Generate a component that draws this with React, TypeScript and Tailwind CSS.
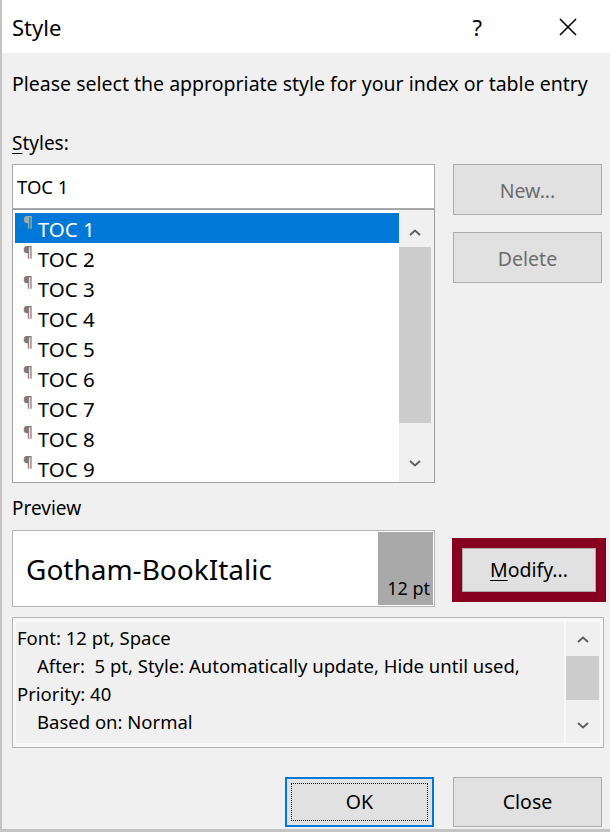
import React from 'react';

const FONT = { fontFamily: '"Noto Sans", "Liberation Sans", sans-serif' };

const Chevron: React.FC<{ dir: 'up' | 'down' }> = ({ dir }) => (
  <svg width="12" height="7" viewBox="0 0 12 7" className="block">
    <polyline
      points={dir === 'up' ? '1,6 6,1.5 11,6' : '1,1 6,5.5 11,1'}
      fill="none"
      stroke="#606060"
      strokeWidth="2"
    />
  </svg>
);

const STYLES = ['TOC 1', 'TOC 2', 'TOC 3', 'TOC 4', 'TOC 5', 'TOC 6', 'TOC 7', 'TOC 8', 'TOC 9'];

export default function App() {
  return (
    <div
      style={FONT}
      className="w-[610px] h-[832px] bg-[#f0f0f0] border-l-2 border-b-[3px] border-[#c4c4c4] flex flex-col text-black overflow-hidden"
    >
      {/* Title bar */}
      <div className="h-[53px] shrink-0 bg-white flex items-center pl-[10px]">
        <span className="text-[22px] leading-none">Style</span>
        <span className="ml-auto text-[22px] leading-none">?</span>
        <svg width="18" height="18" viewBox="0 0 18 18" className="ml-[77px] mr-[33px]">
          <path d="M1 1 L17 17 M17 1 L1 17" stroke="#000" strokeWidth="1.6" />
        </svg>
      </div>

      <div className="flex flex-col pl-[10px]">
        <p className="mt-[19px] text-[19.5px] leading-[24px]">
          Please select the appropriate style for your index or table entry
        </p>
        <p className="mt-[35px] text-[19px] leading-[24px]">
          <span className="underline underline-offset-[3px]">S</span>tyles:
        </p>

        {/* Styles row */}
        <div className="mt-[9px] flex items-start">
          <div className="w-[423px] flex flex-col">
            <div className="h-[45px] border border-[#ababab] bg-white flex items-center pl-[4px] text-[18.5px]">
              TOC 1
            </div>
            <div className="h-[274px] border border-[#a0a0a0] bg-white flex overflow-hidden">
              <div className="flex-1 pl-[2px] pt-[3px] flex flex-col">
                {STYLES.map((s, i) => (
                  <div
                    key={s}
                    className={`h-[30px] shrink-0 flex items-start ${i === 0 ? 'bg-[#0078d7] text-white' : ''}`}
                  >
                    <span
                      className={`ml-[8px] mt-[1px] text-[15px] font-bold leading-none ${i === 0 ? 'text-[#a9a9a9]' : 'text-[#7a7a7a]'}`}
                    >
                      ¶
                    </span>
                    <span className="ml-[5px] text-[20.5px] leading-[32px]">{s}</span>
                  </div>
                ))}
              </div>
              <div className="w-[35px] bg-[#f0f0f0] flex flex-col">
                <div className="h-[37px] flex justify-center pt-[19px] pr-[3px]">
                  <Chevron dir="up" />
                </div>
                <div className="h-[176px] bg-[#cdcdcd] mr-[3px]" />
                <div className="flex-1" />
                <div className="h-[36px] flex justify-center pt-[14px] pr-[3px]">
                  <Chevron dir="down" />
                </div>
              </div>
            </div>
          </div>

          <div className="ml-[18px] w-[149px] flex flex-col">
            <div className="h-[51px] border border-[#adadad] bg-[#e1e1e1] flex items-center justify-center pt-[3px] text-[19.5px] text-[#6d6d6d]">
              New...
            </div>
            <div className="mt-[17px] h-[51px] border border-[#adadad] bg-[#e1e1e1] flex items-center justify-center pt-[3px] text-[19.5px] text-[#6d6d6d]">
              Delete
            </div>
          </div>
        </div>

        <p className="mt-[13px] text-[19px] leading-[24px]">Preview</p>

        {/* Preview row */}
        <div className="mt-[10px] flex items-start">
          <div className="w-[423px] h-[77px] border border-[#b4b4b4] bg-white p-[1px] flex">
            <div className="flex-1 flex items-center pl-[12px] text-[28px]">Gotham-BookItalic</div>
            <div className="w-[55px] bg-[#a9a9a9] flex items-end justify-end pr-[3px] pb-[6px] text-[18px] leading-[22px]">
              12 pt
            </div>
          </div>
          <div className="ml-[17px] mt-[8px] w-[154px] h-[64px] border-[10px] border-[#870020] flex">
            <div className="flex-1 border border-[#adadad] bg-[#e1e1e1] flex items-center justify-center text-[19.5px]">
              <span>
                <span className="underline underline-offset-[3px]">M</span>odify...
              </span>
            </div>
          </div>
        </div>

        {/* Description */}
        <div className="mt-[10px] w-[592px] h-[131px] border border-[#b4b4b4] bg-[#f8f8f8] pt-[4px] pl-[3px] pr-[3px] pb-[4px] flex">
          <div className="flex-1 bg-[#f0f0f0] pl-[1px] pt-[2px] text-[18.5px] leading-[28px]">
            <p>Font: 12 pt, Space</p>
            <p className="pl-[20px]">After:&nbsp; 5 pt, Style: Automatically update, Hide until used,</p>
            <p>Priority: 40</p>
            <p className="pl-[20px]">Based on: Normal</p>
          </div>
          <div className="ml-[2px] w-[34px] bg-[#f0f0f0] flex flex-col">
            <div className="h-[34px] flex justify-center items-center">
              <Chevron dir="up" />
            </div>
            <div className="h-[44px] bg-[#cdcdcd] mr-[1px]" />
            <div className="flex-1 flex justify-center items-end pb-[14px]">
              <Chevron dir="down" />
            </div>
          </div>
        </div>

        {/* Footer */}
        <div className="mt-[29px] flex pl-[273px]">
          <div className="w-[149px] h-[50px] border-2 border-[#0078d7] bg-[#e1e1e1] p-[4px] flex">
            <div className="flex-1 border border-dotted border-black flex items-center justify-center text-[19.5px]">
              OK
            </div>
          </div>
          <div className="ml-[19px] w-[149px] h-[50px] border border-[#adadad] bg-[#e1e1e1] flex items-center justify-center text-[19.5px]">
            Close
          </div>
        </div>
      </div>
    </div>
  );
}
